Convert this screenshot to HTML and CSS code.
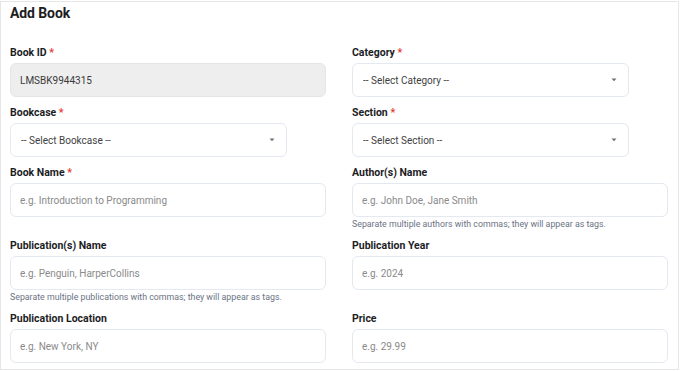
FILE: index.html
```html
<!DOCTYPE html>
<html lang="en">
<head>
<meta charset="utf-8">
<title>Add Book</title>
<link rel="stylesheet" href="styles.css">
</head>
<body>
<div class="card">
  <h2 class="title">Add Book</h2>
  <form class="grid">
    <div class="field">
      <label class="label">Book ID <span class="req">*</span></label>
      <input class="control readonly" type="text" value="LMSBK9944315" readonly>
    </div>
    <div class="field">
      <label class="label">Category <span class="req">*</span></label>
      <div class="select-wrap">
        <select class="control select"><option>-- Select Category --</option></select>
        <svg class="arrow" width="6" height="4" viewBox="0 0 6 4"><path d="M0.5 0.5 L5.5 0.5 L3 3.2 Z" fill="#6f6f6f"/></svg>
      </div>
    </div>
    <div class="field">
      <label class="label">Bookcase <span class="req">*</span></label>
      <div class="select-wrap">
        <select class="control select"><option>-- Select Bookcase --</option></select>
        <svg class="arrow" width="6" height="4" viewBox="0 0 6 4"><path d="M0.5 0.5 L5.5 0.5 L3 3.2 Z" fill="#6f6f6f"/></svg>
      </div>
    </div>
    <div class="field">
      <label class="label">Section <span class="req">*</span></label>
      <div class="select-wrap">
        <select class="control select"><option>-- Select Section --</option></select>
        <svg class="arrow" width="6" height="4" viewBox="0 0 6 4"><path d="M0.5 0.5 L5.5 0.5 L3 3.2 Z" fill="#6f6f6f"/></svg>
      </div>
    </div>
    <div class="field">
      <label class="label">Book Name <span class="req">*</span></label>
      <input class="control" type="text" placeholder="e.g. Introduction to Programming">
    </div>
    <div class="field">
      <label class="label">Author(s) Name</label>
      <input class="control" type="text" placeholder="e.g. John Doe, Jane Smith">
      <p class="help">Separate multiple authors with commas; they will appear as tags.</p>
    </div>
    <div class="field">
      <label class="label">Publication(s) Name</label>
      <input class="control" type="text" placeholder="e.g. Penguin, HarperCollins">
      <p class="help">Separate multiple publications with commas; they will appear as tags.</p>
    </div>
    <div class="field">
      <label class="label">Publication Year</label>
      <input class="control" type="text" placeholder="e.g. 2024">
    </div>
    <div class="field">
      <label class="label">Publication Location</label>
      <input class="control" type="text" placeholder="e.g. New York, NY">
    </div>
    <div class="field">
      <label class="label">Price</label>
      <input class="control" type="text" placeholder="e.g. 29.99">
    </div>
  </form>
</div>
</body>
</html>
```

FILE: styles.css
```css
* { box-sizing: border-box; }

html, body {
  margin: 0;
  padding: 0;
  background: #ffffff;
}

body {
  padding-top: 1px;
  font-family: Roboto, Inter, "Noto Sans", "Liberation Sans", sans-serif;
  color: #1d1d1f;
}

.card {
  width: 679px;
  height: 369px;
  overflow: hidden;
  border: 1px solid #e6e6e6;
  padding: 2px 9px 0 9px;
  background: #ffffff;
}

.title {
  margin: 0 0 22px 0;
  font-size: 14px;
  line-height: 19px;
  font-weight: 700;
  letter-spacing: -0.1px;
  color: #1d1d1f;
}

.grid {
  display: grid;
  grid-template-columns: 316px 316px;
  column-gap: 26px;
  row-gap: 8px;
  align-items: start;
}

.field {
  display: flex;
  flex-direction: column;
  align-items: flex-start;
}

.label {
  font-size: 10.5px;
  line-height: 16px;
  font-weight: 700;
  color: #1d1d1f;
  margin-bottom: 2px;
}

.req {
  color: #e53935;
}

.control {
  width: 316px;
  height: 34px;
  border: 1px solid #e4e8f0;
  border-radius: 6px;
  background: #ffffff;
  padding: 0 9px;
  font-family: Roboto, Inter, "Noto Sans", "Liberation Sans", sans-serif;
  font-size: 10px;
  color: #3a3a3a;
  outline: none;
}

.control::placeholder {
  color: #8a8a8a;
}

.readonly {
  background: #eeeeee;
  border-color: #e6e6e6;
  color: #3a3a3a;
}

.select-wrap {
  position: relative;
  width: 277px;
}

.select {
  width: 277px;
  appearance: none;
  -webkit-appearance: none;
  padding-left: 10px;
  color: #3f3f3f;
}

.arrow {
  position: absolute;
  right: 12px;
  top: 15px;
}

.help {
  margin: 2px 0 0 0;
  font-size: 8.8px;
  line-height: 11px;
  color: #6b7384;
}
```
